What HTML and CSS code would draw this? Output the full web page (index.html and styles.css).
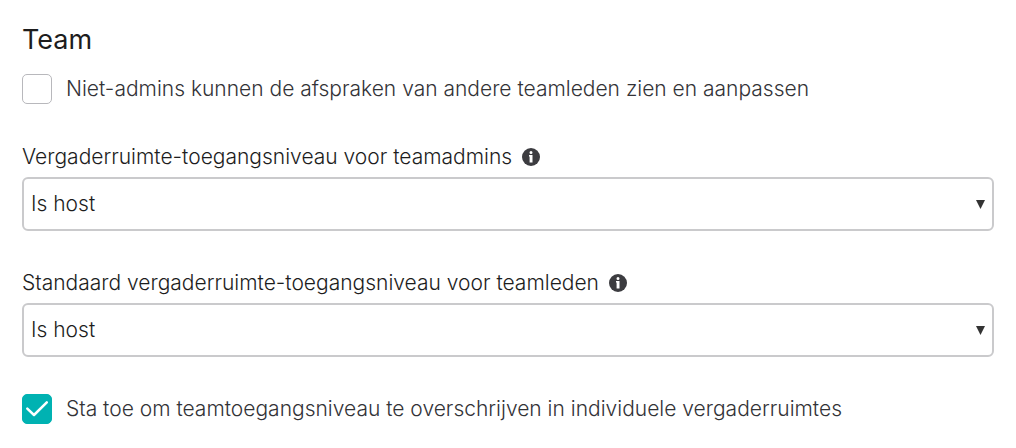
FILE: index.html
```html
<!DOCTYPE html>
<html lang="nl">
<head>
<meta charset="utf-8">
<title>Team</title>
<link rel="stylesheet" href="styles.css">
</head>
<body>
<form class="settings">
  <h2 class="title">Team</h2>
  <label class="check">
    <input class="box" type="checkbox">
    <span>Niet-admins kunnen de afspraken van andere teamleden zien en aanpassen</span>
  </label>
  <div class="field">
    <div class="caption">
      <label for="admins">Vergaderruimte-toegangsniveau voor teamadmins</label>
      <svg class="info" viewBox="0 0 18 18" aria-hidden="true"><circle cx="9" cy="9" r="9"/><path d="M9 2.900a1.500 1.500 0 1 1 0 3 1.500 1.500 0 0 1 0-3zM7 7h3.500v7.500H7.600V8.500H7z"/></svg>
    </div>
    <div class="picker">
      <select class="select" id="admins"><option>Is host</option></select>
      <svg class="arrow" viewBox="0 0 9 9" aria-hidden="true"><path d="M0 0h9L4.500 9z"/></svg>
    </div>
  </div>
  <div class="field">
    <div class="caption">
      <label for="members">Standaard vergaderruimte-toegangsniveau voor teamleden</label>
      <svg class="info" viewBox="0 0 18 18" aria-hidden="true"><circle cx="9" cy="9" r="9"/><path d="M9 2.900a1.500 1.500 0 1 1 0 3 1.500 1.500 0 0 1 0-3zM7 7h3.500v7.500H7.600V8.500H7z"/></svg>
    </div>
    <div class="picker">
      <select class="select" id="members"><option>Is host</option></select>
      <svg class="arrow" viewBox="0 0 9 9" aria-hidden="true"><path d="M0 0h9L4.500 9z"/></svg>
    </div>
  </div>
  <label class="check check-last">
    <span class="tickbox">
      <input class="box" type="checkbox" checked>
      <svg class="tick" viewBox="0 0 30 30" aria-hidden="true"><path d="M5.300 14.700l6.700 6.300L24.800 8.300"/></svg>
    </span>
    <span>Sta toe om teamtoegangsniveau te overschrijven in individuele vergaderruimtes</span>
  </label>
</form>
</body>
</html>
```
FILE: styles.css
```css
* { box-sizing: border-box; }
body {
  margin: 0;
  background: #fff;
  color: #1d1d1d;
  font: 300 21px/26px Inter, "Liberation Sans", sans-serif;
}
.settings { padding: 22px 22px 24px; }
.title { margin: 0 0 16px; font-size: 27px; font-weight: 400; line-height: 35px; }
.check { display: flex; align-items: center; gap: 14px; height: 32px; color: #333337; }
.box {
  appearance: none;
  flex: none;
  display: block;
  width: 30px;
  height: 30px;
  margin: 0;
  border: 1px solid #b8b8bc;
  border-radius: 5px;
  background: #fff;
}
.box:checked { border-color: #00b2b2; background: #00b2b2; }
.tickbox { display: grid; }
.tickbox > * { grid-area: 1 / 1; }
.tick {
  width: 30px;
  height: 30px;
  fill: none;
  stroke: #fff;
  stroke-width: 2.5;
  stroke-linecap: round;
  stroke-linejoin: round;
  pointer-events: none;
  z-index: 1;
}
.field { margin-top: 39px; }
.caption { display: flex; align-items: center; gap: 10px; height: 26px; margin-bottom: 7px; }
.info { width: 18px; height: 18px; fill: #3c3c40; }
.info path { fill: #fff; }
.picker { display: grid; align-items: center; }
.picker > * { grid-area: 1 / 1; }
.select {
  appearance: none;
  width: 100%;
  height: 54px;
  padding: 0 28px 0 7px;
  border: 2px solid #cacacc;
  border-radius: 6px;
  background: #fff;
  color: inherit;
  font: inherit;
}
.arrow { justify-self: end; width: 9px; height: 9px; margin-right: 9px; fill: #333; pointer-events: none; }
.check-last { margin-top: 36px; }
```
